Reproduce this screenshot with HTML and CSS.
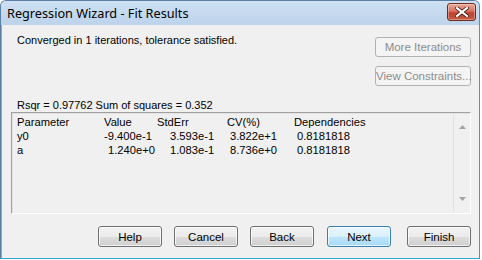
FILE: index.html
```html
<!DOCTYPE html>
<html>
<head>
<meta charset="utf-8">
<link rel="stylesheet" href="styles.css">
</head>
<body>
<div class="window">
  <div class="titlebar">
    <span class="title">Regression Wizard - Fit Results</span>
    <button class="close" aria-label="Close">
      <svg width="14" height="10" viewBox="0 0 14 10">
        <path d="M2 1 L12 9 M12 1 L2 9" stroke="#3a1a14" stroke-width="3.6" stroke-linecap="square"/>
        <path d="M2 1 L12 9 M12 1 L2 9" stroke="#ffffff" stroke-width="2.2" stroke-linecap="square"/>
      </svg>
    </button>
  </div>
  <div class="client">
    <div class="top">
      <div class="message">Converged in 1 iterations, tolerance satisfied.</div>
      <div class="side-buttons">
        <button class="btn disabled">More Iterations</button>
        <button class="btn disabled">View Constraints...</button>
      </div>
    </div>
    <div class="rsqr">Rsqr = 0.97762 Sum of squares = 0.352</div>
    <div class="listbox">
      <div class="table">
        <span class="c1">Parameter</span><span class="c2">Value</span><span class="c3">StdErr</span><span class="c4">CV(%)</span><span class="c5">Dependencies</span>
        <span class="c1">y0</span><span class="c2">-9.400e-1</span><span class="c3 v">3.593e-1</span><span class="c4 v">3.822e+1</span><span class="c5 v">0.8181818</span>
        <span class="c1">a</span><span class="c2 v">1.240e+0</span><span class="c3 v">1.083e-1</span><span class="c4 v">8.736e+0</span><span class="c5 v">0.8181818</span>
      </div>
      <div class="scrollbar">
        <svg width="7" height="4" viewBox="0 0 7 4"><path d="M3.5 0 L7 4 L0 4 Z" fill="#a3a3a3"/></svg>
        <svg width="7" height="4" viewBox="0 0 7 4"><path d="M0 0 L7 0 L3.5 4 Z" fill="#a3a3a3"/></svg>
      </div>
    </div>
    <div class="bottom">
      <button class="btn">Help</button>
      <button class="btn">Cancel</button>
      <button class="btn">Back</button>
      <button class="btn default">Next</button>
      <button class="btn">Finish</button>
    </div>
  </div>
</div>
</body>
</html>
```

FILE: styles.css
```css
html, body {
  margin: 0;
  padding: 0;
  background: #ffffff;
}
body {
  width: 482px;
  height: 260px;
  overflow: hidden;
  font-family: "Liberation Sans", Arial, sans-serif;
}
.window {
  box-sizing: border-box;
  width: 480px;
  height: 259px;
  border: 1px solid #5c7fa6;
  border-right-color: #2f9fd8;
  border-bottom-color: #2fa5d8;
  border-radius: 6px 6px 0 0;
  display: flex;
  flex-direction: column;
  overflow: hidden;
  background: #b9d1ea;
}
.titlebar {
  height: 24px;
  flex: none;
  display: flex;
  align-items: center;
  justify-content: space-between;
  padding: 0 3px 0 6px;
  background: linear-gradient(#cfe0f2, #bcd3eb);
}
.title {
  font-family: "Noto Sans", "Open Sans", sans-serif;
  font-size: 12.7px;
  color: #000;
  margin-top: -1px;
}
.close {
  width: 29px;
  height: 18px;
  margin-top: -3px;
  padding: 0;
  border: 1px solid #6b2a20;
  border-radius: 3px;
  background: linear-gradient(#e9a899 0%, #d8735f 45%, #c0422c 55%, #c75a44 100%);
  display: flex;
  align-items: center;
  justify-content: center;
  box-shadow: inset 0 0 0 1px rgba(255,255,255,0.35);
}
.client {
  flex: 1;
  background: #f0f0f0;
  border-left: 1px solid #8aa7c6;
  display: flex;
  flex-direction: column;
  padding: 0 8px 0 9px;
  font-size: 11px;
  font-family: "Liberation Sans", Arial, sans-serif;
  color: #000;
}
.top {
  display: flex;
  justify-content: space-between;
  height: 74px;
}
.message {
  padding: 9px 0 0 6px;
  font-size: 11px;
}
.side-buttons {
  display: flex;
  flex-direction: column;
  gap: 9px;
  padding-top: 12px;
}
.btn {
  box-sizing: border-box;
  width: 64px;
  height: 21px;
  padding: 0;
  font-family: "Liberation Sans", Arial, sans-serif;
  font-size: 11.5px;
  white-space: nowrap;
  color: #000;
  border: 1px solid #707070;
  border-radius: 3px;
  background: linear-gradient(#f2f2f2 0%, #ebebeb 50%, #dddddd 51%, #cfcfcf 100%);
  box-shadow: inset 0 0 0 1px rgba(255,255,255,0.7);
}
.side-buttons .btn {
  width: 96px;
  height: 20px;
}
.btn.disabled {
  color: #8d8d8d;
  border-color: #adb2b5;
  background: #f4f4f4;
  box-shadow: none;
}
.btn.default {
  border-color: #3c7fb1;
  background: linear-gradient(#eaf6fd 0%, #d9f0fc 50%, #bee6fd 51%, #a7d9f5 100%);
}
.rsqr {
  padding-left: 6px;
  height: 13px;
  line-height: 13px;
  font-size: 11px;
}
.listbox {
  height: 100px;
  display: flex;
  border: 1px solid;
  border-color: #a0a0a0 #ffffff #ffffff #a0a0a0;
  box-shadow: inset 1px 1px 0 #e3e3e3;
}
.table {
  flex: 1;
  padding: 2px 0 0 5px;
  display: grid;
  grid-template-columns: 87px 53px 70px 67px 1fr;
  grid-auto-rows: 14px;
  align-content: start;
  line-height: 14px;
  font-size: 11.2px;
  white-space: nowrap;
}
.c2.v { padding-left: 4px; }
.c3.v { padding-left: 13px; }
.c4.v { padding-left: 3px; }
.c5.v { padding-left: 3px; }
.scrollbar {
  width: 16px;
  border-left: 1px solid #e3e3e3;
  display: flex;
  flex-direction: column;
  justify-content: space-between;
  align-items: center;
  padding: 12px 0 12px;
}
.bottom {
  display: flex;
  justify-content: flex-end;
  gap: 12px;
  padding-top: 12px;
}
.bottom .btn:nth-child(3) { margin-right: 1px; }
.bottom .btn.default { margin-right: 4px; }
```
